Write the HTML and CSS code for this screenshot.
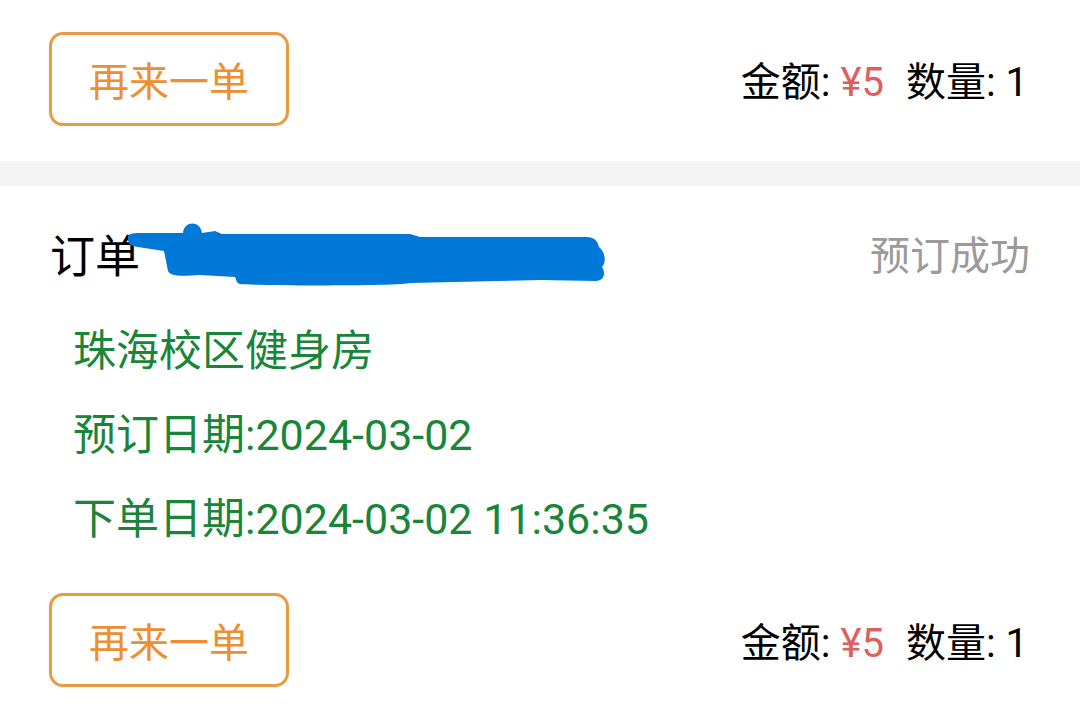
FILE: index.html
```html
<!DOCTYPE html>
<html lang="zh-CN">
<head>
<meta charset="utf-8">
<title>订单列表</title>
<link rel="stylesheet" href="styles.css">
</head>
<body>
  <div class="card card-first">
    <div class="footer">
      <div class="btn">再来一单</div>
      <div class="summary">金额: <span class="price">¥5</span><span class="qty">数量: 1</span></div>
    </div>
  </div>
  <div class="gap"></div>
  <div class="card card-order">
    <div class="header">
      <div class="order-no">订单</div>
      <div class="status">预订成功</div>
    </div>
    <svg class="redact" viewBox="120 215 500 75" width="500" height="75" aria-hidden="true">
      <path fill="#0078d7" d="M128,238 C127,233 131,232 140,232 L183,232 C184,220 200,219 202,232 L215,230 L222,233 L410,233 L420,236 L586,236 C596,236 598,242 599,246 C606,252 606,262 602,266 C606,272 604,280 596,280 L541,279 L410,282 C405,285 260,285 240,283 C236,282 236,277 235,276 L200,274 C175,276 170,274 168,270 L164,250 L138,246 C130,245 128,242 128,238 Z"/>
    </svg>
    <div class="info">
      <div class="line">珠海校区健身房</div>
      <div class="line">预订日期:2024-03-02</div>
      <div class="line">下单日期:2024-03-02 11:36:35</div>
    </div>
    <div class="footer">
      <div class="btn">再来一单</div>
      <div class="summary">金额: <span class="price">¥5</span><span class="qty">数量: 1</span></div>
    </div>
  </div>
  <div class="gap"></div>
</body>
</html>
```

FILE: styles.css
```css
html, body {
  margin: 0;
  padding: 0;
  background: #ffffff;
}
body {
  font-family: Roboto, "Noto Sans CJK SC", sans-serif;
  color: #000;
  width: 1080px;
  height: 721px;
  overflow: hidden;
}
.card {
  background: #fff;
  position: relative;
}
.card-first {
  padding: 32px 0 35px;
}
.card-order {
  padding: 0 0 35px;
}
.gap {
  height: 25px;
  background: #f4f4f4;
}
.footer {
  display: flex;
  align-items: center;
  justify-content: space-between;
  padding: 0 52px 0 49px;
}
.btn {
  box-sizing: border-box;
  width: 240px;
  height: 94px;
  border: 3px solid #ea9a44;
  border-radius: 14px;
  display: flex;
  align-items: center;
  justify-content: center;
  color: #ec8f30;
  font-size: 40px;
}
.summary {
  font-size: 40px;
  color: #000;
}
.price {
  color: #dc6060;
}
.qty {
  margin-left: 22px;
}
.header {
  display: flex;
  align-items: center;
  justify-content: space-between;
  padding: 37px 50px 0 50px;
  height: 60px;
  font-size: 40px;
}
.order-no {
  font-size: 45px;
}
.status {
  color: #9a9a9a;
}
.redact {
  position: absolute;
  left: 120px;
  top: 30px;
}
.info {
  padding: 26px 0 0 73px;
  color: #198539;
  font-size: 43px;
}
.line {
  line-height: 84px;
  height: 84px;
}
.card-order .footer {
  margin-top: 32px;
}
```
